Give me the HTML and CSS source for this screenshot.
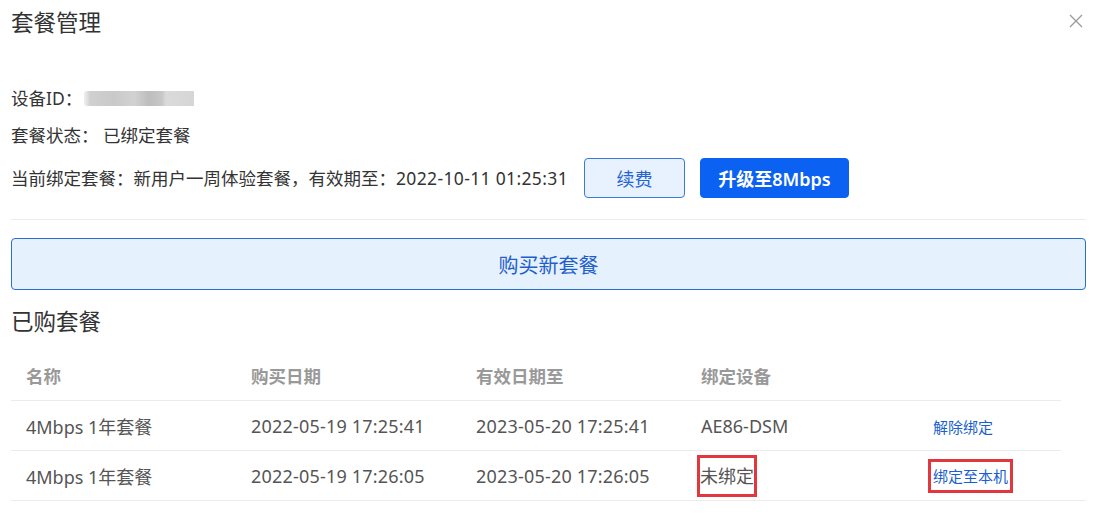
FILE: index.html
```html
<!DOCTYPE html>
<html lang="zh">
<head>
<meta charset="utf-8">
<link rel="stylesheet" href="styles.css">
</head>
<body>
<div class="dialog">
  <div class="head">
    <h1 class="title">套餐管理</h1>
    <span class="close">
      <svg width="14" height="14" viewBox="0 0 14 14"><path d="M1 1L13 13M13 1L1 13" stroke="#9a9a9a" stroke-width="1.3" fill="none"/></svg>
    </span>
  </div>
  <div class="info">
    <div class="line">设备ID：<span class="blur"></span></div>
    <div class="line">套餐状态：&nbsp;已绑定套餐</div>
    <div class="line line-btns"><span class="plan">当前绑定套餐：新用户一周体验套餐，有效期至：<span class="num">2022-10-11 01:25:31</span></span>
      <button class="btn btn-light">续费</button>
      <button class="btn btn-primary">升级至8Mbps</button>
    </div>
  </div>
  <div class="divider"></div>
  <button class="buy">购买新套餐</button>
  <h2 class="subtitle">已购套餐</h2>
  <div class="table">
    <div class="row thead">
      <div class="c">名称</div><div class="c">购买日期</div><div class="c">有效日期至</div><div class="c">绑定设备</div><div class="c act"></div>
    </div>
    <div class="row">
      <div class="c">4Mbps 1年套餐</div><div class="c num">2022-05-19 17:25:41</div><div class="c num">2023-05-20 17:25:41</div><div class="c">AE86-DSM</div><div class="c act"><a class="link">解除绑定</a></div>
    </div>
    <div class="row last">
      <div class="c">4Mbps 1年套餐</div><div class="c num">2022-05-19 17:26:05</div><div class="c num">2023-05-20 17:26:05</div><div class="c"><span class="mark mark-text">未绑定</span></div><div class="c act"><a class="link mark mark-link">绑定至本机</a></div>
    </div>
  </div>
</div>
</body>
</html>
```
FILE: styles.css
```css
* { box-sizing: border-box; }
html, body { margin: 0; padding: 0; background: #fff; }
body {
  font-family: "Noto Sans", "Noto Sans CJK SC", sans-serif;
  color: #333;
  font-size: 17.5px;
}
.dialog { width: 1094px; padding: 0 8px 0 11px; }
.head { display: flex; justify-content: space-between; align-items: flex-start; height: 46px; }
.title { margin: 0; padding-top: 6px; font-size: 22.5px; font-weight: 400; line-height: 34px; color: #333; }
.close { margin-top: 14px; margin-right: 3px; display: block; }
.close svg { display: block; }
.info { padding-top: 37px; }
.line { display: flex; align-items: center; height: 30px; line-height: 30px; margin-bottom: 7px; }
.line-btns { height: 40px; margin-top: 8px; margin-bottom: 0; }
.num { letter-spacing: 0.2px; }
.blur {
  display: inline-block; width: 110px; height: 15px; margin-left: 2px;
  background: linear-gradient(90deg, #eee 0, #e2e2e2 3px, #d0d0d0 6px, #c9c9c9 30px, #d2d2d2 50px, #bdbdbd 65px, #c8c8c8 78px, #dadada 82px, #d6d6d6 110px);
  border-radius: 3px 0 0 3px;
}
.plan .num { letter-spacing: 0.35px; }
.btn { font-family: inherit; font-size: 18px; height: 40px; border-radius: 4px; cursor: pointer; padding: 0; }
.btn-light { width: 101px; margin-left: 16px; background: #e8f2ff; border: 1px solid #3b7ad6; color: #2463d3; }
.btn-primary { width: 149px; margin-left: 15px; background: #0b62f2; border: 1px solid #0b62f2; color: #fff; font-weight: 600; }
.divider { height: 1px; background: #ececec; margin-top: 21px; width: 1075px; }
.buy {
  display: block; width: 1075px; height: 52px; margin-top: 18px;
  background: #e6f1fe; border: 1px solid #2a6fce; border-radius: 4px;
  color: #1f5fcc; font-family: inherit; font-size: 20px;
}
.subtitle { margin: 0; padding-top: 17px; font-size: 22.5px; font-weight: 400; line-height: 30px; color: #333; height: 61px; }
.table { width: 1075px; }
.row { display: flex; height: 50px; align-items: center; border-bottom: 1px solid #ececec; width: 1050px; color: #555; font-size: 18px; }
.row.last { width: 1075px; }
.thead { height: 50px; color: #999; font-weight: 700; font-size: 17.5px; }
.c { width: 225px; padding-left: 15px; white-space: nowrap; }
.c.act { width: 150px; padding-left: 22px; }
.link { color: #1a5fd0; font-size: 15px; }
.mark { display: inline-block; border: 3px solid #e2373f; }
.mark-text { padding: 3px 0; margin-left: -4px; line-height: 30px; }
.mark-link { padding: 2px 2px; margin-left: -5px; line-height: 24px; }
```
